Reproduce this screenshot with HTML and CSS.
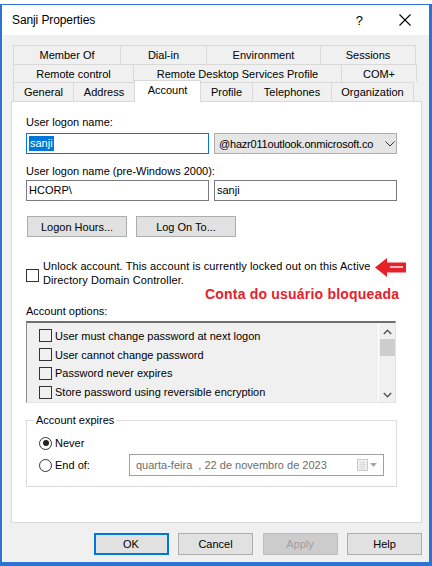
FILE: index.html
```html
<!DOCTYPE html>
<html>
<head>
<meta charset="utf-8">
<link rel="stylesheet" href="styles.css">
</head>
<body>
<div class="screen">
  <div class="sliver"></div>
  <div class="window">
    <div class="titlebar">
      <span class="title">Sanji Properties</span>
      <span class="tb-help">?</span>
      <svg class="tb-close" width="12" height="12" viewBox="0 0 12 12"><path d="M0.5 0.5 L11.5 11.5 M11.5 0.5 L0.5 11.5" stroke="#000" stroke-width="1.1" fill="none"/></svg>
    </div>
    <div class="body">
      <div class="tabs">
        <div class="tabrow r1">
          <div class="tab" style="width:108px">Member Of</div>
          <div class="tab" style="width:87px">Dial-in</div>
          <div class="tab" style="width:115px">Environment</div>
          <div class="tab" style="width:96px">Sessions</div>
        </div>
        <div class="tabrow r2">
          <div class="tab" style="width:121px">Remote control</div>
          <div class="tab" style="width:209px">Remote Desktop Services Profile</div>
          <div class="tab" style="width:76px">COM+</div>
        </div>
        <div class="tabrow r3">
          <div class="tab" style="width:61px">General</div>
          <div class="tab" style="width:62px">Address</div>
          <div class="tab sel" style="width:67px">Account</div>
          <div class="tab" style="width:53px">Profile</div>
          <div class="tab" style="width:80px">Telephones</div>
          <div class="tab" style="width:83px">Organization</div>
        </div>
      </div>
      <div class="panel">
        <div class="lbl l1">User logon name:</div>
        <div class="row">
          <div class="input focus"><span class="hl">sanji</span></div>
          <div class="combo"><span class="combo-text">@hazr011outlook.onmicrosoft.co</span>
            <svg class="chev" width="10" height="6" viewBox="0 0 10 6"><path d="M0.5 0.5 L5 5 L9.5 0.5" stroke="#333" stroke-width="1" fill="none"/></svg>
          </div>
        </div>
        <div class="lbl l2">User logon name (pre-Windows 2000):</div>
        <div class="row">
          <div class="input">HCORP\</div>
          <div class="input">sanji</div>
        </div>
        <div class="btnrow">
          <div class="btn">Logon Hours...</div>
          <div class="btn">Log On To...</div>
        </div>
        <div class="unlock">
          <div class="cb"></div>
          <div class="unlock-text">Unlock account. This account is currently locked out on this Active<br>Directory Domain Controller.</div>
          <svg class="arrow" width="32" height="19" viewBox="0 0 32 19"><path d="M0 9.5 L12 0 L12 4.5 L31 4.5 L31 14.5 L12 14.5 L12 19 Z" fill="#e8202a"/><path d="M15 9 L28 9" stroke="#fff" stroke-width="1.4"/></svg>
          <div class="note">Conta do usuário bloqueada</div>
        </div>
        <div class="lbl l3">Account options:</div>
        <div class="list">
          <div class="items">
            <div class="item"><div class="cb sm"></div>User must change password at next logon</div>
            <div class="item"><div class="cb sm"></div>User cannot change password</div>
            <div class="item"><div class="cb sm"></div>Password never expires</div>
            <div class="item"><div class="cb sm"></div>Store password using reversible encryption</div>
          </div>
          <div class="scroll">
            <svg class="sarrow" width="9" height="6" viewBox="0 0 9 6"><path d="M0.8 5 L4.5 1.2 L8.2 5" stroke="#555" stroke-width="1.4" fill="none"/></svg>
            <div class="thumb"></div>
            <div class="track"></div>
            <svg class="sarrow" width="9" height="6" viewBox="0 0 9 6"><path d="M0.8 1 L4.5 4.8 L8.2 1" stroke="#555" stroke-width="1.4" fill="none"/></svg>
          </div>
        </div>
        <div class="group">
          <div class="legend">Account expires</div>
          <div class="radio-row r-never"><div class="radio on"></div>Never</div>
          <div class="radio-row r-end"><div class="radio"></div><span class="endlbl">End of:</span>
            <div class="date"><span class="date-text">quarta-feira&nbsp; , 22 de novembro de 2023</span>
              <svg class="cal" width="11" height="12" viewBox="0 0 11 12"><rect x="0.5" y="0.5" width="10" height="11" fill="#f4f4f4" stroke="#c8c8c8"/><path d="M2 3.5 H9 M2 5.5 H9 M2 7.5 H9 M2 9.5 H9 M4 2 V10.5 M6.5 2 V10.5" stroke="#dcdcdc" stroke-width="1"/></svg>
              <svg class="dtri" width="7" height="4" viewBox="0 0 7 4"><path d="M0 0 H7 L3.5 4 Z" fill="#a8a8a8"/></svg>
            </div>
          </div>
        </div>
      </div>
      <div class="footer">
        <div class="fbtn ok">OK</div>
        <div class="fbtn">Cancel</div>
        <div class="fbtn dis">Apply</div>
        <div class="fbtn">Help</div>
      </div>
    </div>
  </div>
</div>
</body>
</html>
```

FILE: styles.css
```css
* { box-sizing: border-box; }
html, body { margin: 0; padding: 0; background: #fff; }
body { font-family: "Liberation Sans", Arial, sans-serif; font-size: 11px; color: #000; }
.screen { width: 432px; height: 566px; overflow: hidden; position: relative; background: #fff; }
.sliver { height: 4px; background: #fff; }
.window {
  height: 562px;
  border-top: 1px solid #2b74d2;
  border-left: 2px solid #2b74d2;
  border-right: 3px solid #2b74d2;
  border-bottom: 4px solid #2b74d2;
  display: flex; flex-direction: column;
  background: #f0f0f0;
}
.titlebar {
  height: 30px; background: #fff; display: flex; align-items: center;
  padding-left: 10px; flex: none;
}
.title { font-size: 12px; letter-spacing: -0.1px; flex: 1; }
.tb-help { font-size: 13px; margin-right: 36px; }
.tb-close { margin-right: 18px; }
.body {
  flex: 1; display: flex; flex-direction: column;
  padding: 10px 8px 0 8px;
  border-left: 1px solid #fafafa;
}
.tabs { padding-left: 2px; display: flex; flex-direction: column; }
.tabrow { display: flex; }
.tabrow.r1 { height: 19px; }
.tabrow.r2 { height: 18px; }
.tabrow.r3 { height: 19px; position: relative; }
.tab {
  border: 1px solid #d9d9d9; border-bottom: none; margin-right: -1px;
  background: #f0f0f0; display: flex; align-items: center; justify-content: center;
  white-space: nowrap;
}
.tab.sel {
  background: #fff; margin-top: -2px; height: 22px; position: relative; z-index: 2;
  padding-bottom: 3px; border-color: #d9d9d9;
}
.panel {
  height: 422px; background: #fff; border: 1px solid #d9d9d9;
  padding: 0 0 0 14px; position: relative;
  width: 411px;
}
.lbl { height: 14px; line-height: 14px; }
.l1 { margin-top: 13px; margin-bottom: 4px; }
.l2 { margin-top: 10px; margin-bottom: 2px; }
.l3 { margin-top: 17px; margin-bottom: 3px; }
.row { display: flex; gap: 5px; height: 21px; }
.input {
  width: 183px; height: 21px; border: 1px solid #7a7a7a; background: #fff;
  padding: 0 0 0 2px; line-height: 19px;
}
.input.focus { border-color: #0078d7; padding-top: 2px; line-height: 15px; }
.hl { background: #0078d7; color: #fff; display: inline-block; height: 15px; line-height: 15px; padding: 0 1px; }
.combo {
  width: 183px; height: 21px; border: 1px solid #adadad; background: #e5e5e5;
  display: flex; align-items: center; padding-left: 4px; overflow: hidden;
}
.combo-text { width: 158px; overflow: hidden; white-space: nowrap; letter-spacing: -0.2px; }
.chev { margin-left: 8px; }
.btnrow { display: flex; gap: 9px; margin-top: 15px; height: 21px; padding-left: 1px; }
.btn {
  width: 100px; height: 21px; background: #e1e1e1; border: 1px solid #adadad;
  display: flex; align-items: center; justify-content: center;
}
.unlock { position: relative; margin-top: 22px; height: 28px; display: flex; align-items: center; }
.cb { width: 13px; height: 13px; border: 1px solid #333; background: #fff; flex: none; }
.unlock .cb { margin-top: 4px; }
.unlock-text { margin-left: 4px; line-height: 14px; white-space: nowrap; letter-spacing: 0.1px; }
.arrow { position: absolute; left: 349px; top: -1px; }
.note {
  position: absolute; left: 179px; top: 27px; color: #e8202a; font-weight: bold;
  font-size: 14px; line-height: 16px; white-space: nowrap; letter-spacing: 0.2px;
}
.list {
  width: 370px; height: 82px; background: #f0f0f0;
  border-top: 2px solid #6e6e6e; border-left: 1px solid #8a8a8a;
  border-right: 1px solid #e3e3e3; border-bottom: 1px solid #e3e3e3;
  display: flex;
}
.items { flex: 1; padding-top: 3.5px; padding-left: 12px; }
.item { height: 18.8px; display: flex; align-items: center; white-space: nowrap; }
.cb.sm { background: transparent; border-color: #333; margin-right: 3px; }
.scroll {
  width: 17px; border-left: 1px solid #fff; display: flex; flex-direction: column; align-items: center;
  background: #f0f0f0;
}
.sarrow { margin: 6px 0 4px; flex: none; }
.thumb { width: 15px; height: 17px; background: #cdcdcd; flex: none; margin-top: 0px; }
.track { flex: 1; }
.group {
  position: relative; width: 371px; height: 67px; border: 1px solid #dcdcdc;
  margin-top: 17px;
}
.legend {
  position: absolute; top: -8px; left: 7px; background: #fff; padding: 0 2px;
  line-height: 14px;
}
.radio-row { display: flex; align-items: center; padding-left: 12px; }
.r-never { margin-top: 14px; height: 16px; }
.r-end { margin-top: 3px; height: 22px; }
.radio {
  width: 13px; height: 13px; border-radius: 50%; border: 1px solid #333; background: #fff;
  margin-right: 3px; position: relative; flex: none;
}
.radio.on::after {
  content: ""; position: absolute; left: 2.5px; top: 2.5px; width: 6px; height: 6px;
  border-radius: 50%; background: #222;
}
.endlbl { width: 74px; }
.date {
  width: 255px; height: 22px; border: 1px solid #a0a0a0; background: #fff;
  display: flex; align-items: center; padding-left: 6px;
}
.date-text { color: #6d6d6d; width: 221px; white-space: nowrap; }
.cal { flex: none; }
.dtri { margin-left: 2px; flex: none; }
.footer { display: flex; justify-content: flex-end; gap: 9.5px; margin-top: 10px; margin-right: -1px; }
.fbtn {
  width: 75px; height: 22px; background: #e1e1e1; border: 1px solid #adadad;
  display: flex; align-items: center; justify-content: center;
}
.fbtn.ok { border: 2px solid #0078d7; }
.fbtn.dis { background: #cccccc; border-color: #bfbfbf; color: #a0a0a0; }
```
